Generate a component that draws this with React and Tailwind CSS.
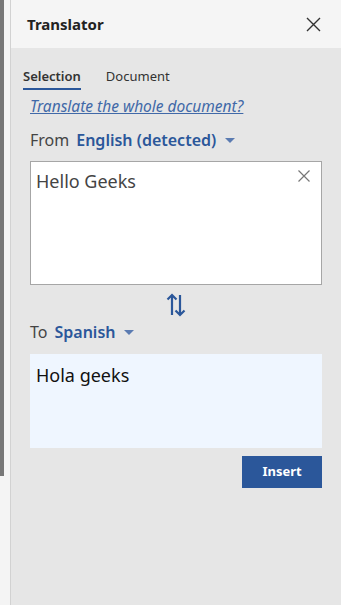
export default function App() {
  const font = { fontFamily: '"Noto Sans", "Open Sans", sans-serif' };
  return (
    <div className="flex h-[605px] w-[341px] overflow-hidden" style={font}>
      <div className="flex w-[4px] flex-col">
        <div className="h-[476px] bg-[#777777]" />
        <div className="flex-1 bg-[#f4f4f4]" />
      </div>
      <div className="w-[6px] bg-[#f4f4f4]" />
      <div className="w-[1px] bg-[#d2d2d2]" />
      <div className="flex flex-1 flex-col bg-[#e6e6e6]">
        <div className="flex h-[48px] items-center justify-between bg-[#f5f5f5] pl-[16px] pr-[20px]">
          <span className="text-[15px] font-bold text-[#222]">Translator</span>
          <svg width="15" height="15" viewBox="0 0 15 15" className="text-[#333]">
            <path d="M1 1L14 14M14 1L1 14" stroke="currentColor" strokeWidth="1.4" />
          </svg>
        </div>
        <div className="flex flex-col pl-[12px] pr-[19px]">
          <div className="mt-[19px] flex gap-[25px] text-[13px]">
            <div className="flex flex-col">
              <span className="leading-[18px] font-semibold text-[#333]">Selection</span>
              <div className="mt-[3px] h-[2px] bg-[#2b579a]" />
            </div>
            <span className="leading-[18px] text-[#333]">Document</span>
          </div>
          <div className="pl-[7px]">
            <a className="mt-[5px] block text-[15.5px] leading-[22px] italic text-[#4169a8] underline" href="#">
              Translate the whole document?
            </a>
            <div className="mt-[12px] flex items-center text-[16px] leading-[22px]">
              <span className="text-[#444]">From</span>
              <span className="ml-[7px] font-semibold text-[#2b579a]">English (detected)</span>
              <svg width="10" height="6" viewBox="0 0 10 6" className="ml-[9px] mt-[2px]">
                <path d="M0 0H10L5 5Z" fill="#5b7bb1" />
              </svg>
            </div>
            <div className="relative mt-[10px] h-[124px] border border-[#a6a6a6] bg-white px-[5px] py-[6px]">
              <span className="text-[18px] leading-[26px] text-[#444]">Hello Geeks</span>
              <svg width="12" height="12" viewBox="0 0 12 12" className="absolute right-[11px] top-[8px]">
                <path d="M0.5 0.5L11.5 11.5M11.5 0.5L0.5 11.5" stroke="#777" strokeWidth="1.2" />
              </svg>
            </div>
            <div className="flex justify-center pt-[8px] pb-[2px]">
              <svg width="22" height="24" viewBox="0 0 22 24">
                <path d="M7 22V2M2.5 6.5L7 2L11.5 6.5" stroke="#2b579a" strokeWidth="2.2" fill="none" />
                <path d="M15 2V22M10.5 17.5L15 22L19.5 17.5" stroke="#2b579a" strokeWidth="2.2" fill="none" />
              </svg>
            </div>
            <div className="mt-[2px] flex items-center text-[16px] leading-[22px]">
              <span className="text-[#444]">To</span>
              <span className="ml-[7px] font-semibold text-[#2b579a]">Spanish</span>
              <svg width="10" height="6" viewBox="0 0 10 6" className="ml-[9px] mt-[2px]">
                <path d="M0 0H10L5 5Z" fill="#5b7bb1" />
              </svg>
            </div>
            <div className="mt-[11px] h-[94px] bg-[#eff6ff] px-[6px] py-[8px]">
              <span className="text-[18px] leading-[26px] text-[#111]">Hola geeks</span>
            </div>
            <div className="mt-[8px] flex justify-end">
              <button className="h-[32px] w-[80px] bg-[#2b579a] text-[13px] font-bold text-white">
                Insert
              </button>
            </div>
          </div>
        </div>
      </div>
    </div>
  );
}
